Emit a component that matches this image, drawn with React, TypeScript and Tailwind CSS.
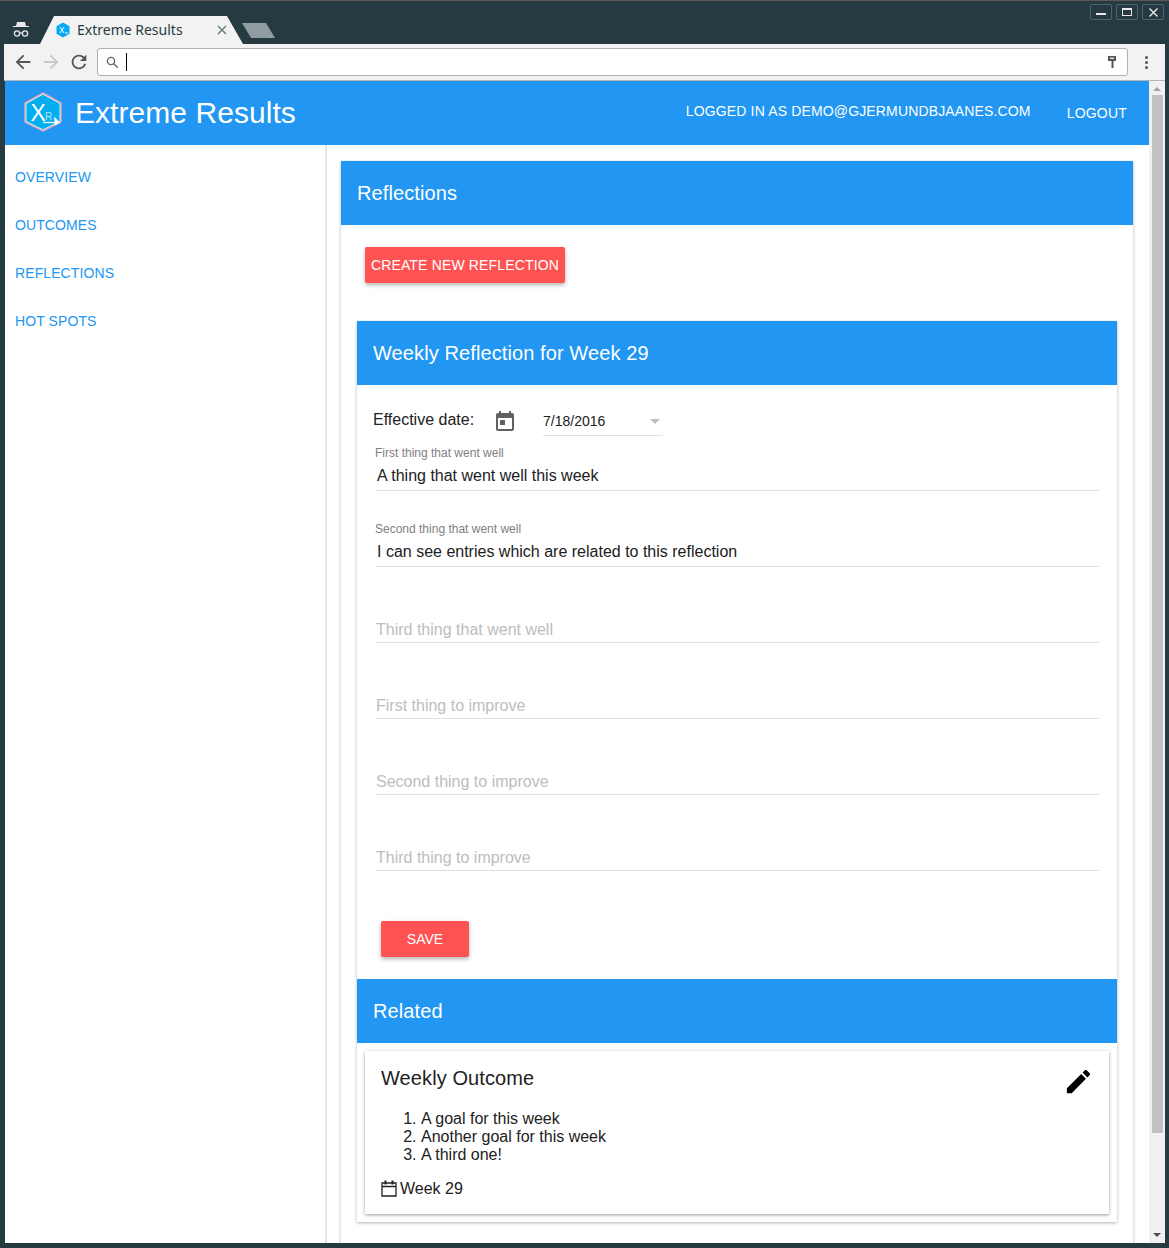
import React from "react";

const font = { fontFamily: '"Liberation Sans", Arial, sans-serif' };

function Field({ label, value, placeholder }: { label?: string; value?: string; placeholder?: string }) {
  return (
    <div className="h-[76px] flex flex-col justify-end border-b border-[#e0e0e0]">
      {label && <div className="text-[12px] leading-[14px] text-[#808080] mb-[6px]">{label}</div>}
      {value ? (
        <div className="text-[16px] leading-[20px] text-[#212121] pl-[2px] pb-[4px]">{value}</div>
      ) : (
        <div className="text-[16px] leading-[20px] text-[#bdbdbd] pl-[1px] pb-[2px]">{placeholder}</div>
      )}
    </div>
  );
}

function PanelHeader({ title }: { title: string }) {
  return (
    <div className="h-[64px] bg-[#2196f3] flex items-center px-[16px] text-[20px] tracking-[0.1px] text-white">{title}</div>
  );
}

function WinButton({ children }: { children: React.ReactNode }) {
  return (
    <div className="w-[22px] h-[16px] rounded-[2px] border border-[#4f646c] flex items-center justify-center">
      {children}
    </div>
  );
}

function TitleBar() {
  return (
    <div className="relative h-[44px] shrink-0 bg-[#263a42] border-t border-[#5a5a5a] flex items-end">
      <div className="w-[41px] h-[28px] flex items-center justify-center">
        <svg width="18" height="18" viewBox="0 0 18 18" fill="none">
          <path d="M5 1h8l1 4h3v1H1V5h3z" fill="#e8e8e8" />
          <circle cx="5" cy="12.5" r="2.6" stroke="#e8e8e8" strokeWidth="1.3" />
          <circle cx="13" cy="12.5" r="2.6" stroke="#e8e8e8" strokeWidth="1.3" />
          <path d="M7.6 12h2.8" stroke="#e8e8e8" strokeWidth="1.2" />
        </svg>
      </div>
      <div className="ml-[-1px] w-[203px] h-[28px] bg-[#f2f2f2] [clip-path:polygon(0_100%,14px_0,187px_0,100%_100%)] flex items-center pl-[15px] pr-[16px]">
        <svg width="16" height="16" viewBox="0 0 16 16" className="mr-[6px]">
          <path d="M8 .5 14.500 4.200v7.600L8 15.500 1.500 11.800V4.200z" fill="#03a9f4" />
          <path d="M5 5l4 6M9 5l-4 6" stroke="#fff" strokeWidth="1" />
          <path d="M10 11h3" stroke="#fff" strokeWidth="1" />
        </svg>
        <span className="text-[14px] leading-[20px] mb-[1px] text-[#263a42] flex-1" style={{ fontFamily: '"Noto Sans", sans-serif' }}>
          Extreme Results
        </span>
        <svg width="10" height="10" viewBox="0 0 10 10">
          <path d="M1 1l8 8M9 1l-8 8" stroke="#6f7f7f" strokeWidth="1.5" />
        </svg>
      </div>
      <div className="w-[33px] h-[15px] mb-[6px] ml-[-1px] bg-[#8f9ca0] [clip-path:polygon(0_0,24px_0,100%_100%,9px_100%)]" />
      <div className="absolute top-[3px] right-[5px] flex gap-[4px]">
        <WinButton>
          <div className="w-[10px] h-[2px] bg-[#e8e8e8] mt-[3px]" />
        </WinButton>
        <WinButton>
          <div className="w-[10px] h-[8px] border border-[#e8e8e8] border-t-2" />
        </WinButton>
        <WinButton>
          <svg width="9" height="9" viewBox="0 0 9 9">
            <path d="M.5.5l8 8M8.500.5l-8 8" stroke="#e8e8e8" strokeWidth="1.4" />
          </svg>
        </WinButton>
      </div>
    </div>
  );
}

function Toolbar() {
  return (
    <div className="h-[37px] shrink-0 bg-[#f2f2f2] border-b border-[#b4b4b4] flex items-center pl-[8px] pr-[9px] ml-[-1px]">
      <svg width="22" height="22" viewBox="0 0 24 24" className="mr-[6px]" fill="#555">
        <path d="M20 11H7.830l5.590-5.590L12 4l-8 8 8 8 1.410-1.410L7.830 13H20z" />
      </svg>
      <svg width="22" height="22" viewBox="0 0 24 24" className="mr-[6px]" fill="#c8c8c8">
        <path d="M12 4l-1.410 1.410L16.170 11H4v2h12.170l-5.580 5.590L12 20l8-8z" />
      </svg>
      <svg width="22" height="22" viewBox="0 0 24 24" className="mr-[7px]" fill="#555">
        <path d="M17.650 6.350A7.958 7.958 0 0 0 12 4c-4.420 0-7.990 3.580-7.990 8s3.570 8 7.990 8c3.730 0 6.840-2.550 7.730-6h-2.080A5.990 5.990 0 0 1 12 18c-3.310 0-6-2.690-6-6s2.690-6 6-6c1.660 0 3.140.69 4.220 1.780L13 11h7V4z" />
      </svg>
      <div className="w-[1031px] h-[28px] bg-white border border-[#b0b0b0] rounded-[3px] flex items-center pl-[8px] pr-[10px]">
        <svg width="13" height="13" viewBox="0 0 13 13" fill="none" stroke="#666" strokeWidth="1.4">
          <circle cx="5" cy="5" r="3.6" />
          <path d="M7.800 7.800l4 4" />
        </svg>
        <div className="w-px h-[18px] bg-black ml-[7px]" />
        <div className="flex-1" />
        <svg width="10" height="14" viewBox="0 0 10 14">
          <path d="M1 1h8v5H6.500v7H4.500V6H1z" fill="#555" />
          <path d="M3 2.500h4v1.500H3z" fill="#ddd" />
        </svg>
      </div>
      <div className="ml-[17px] flex flex-col gap-[2px]">
        <div className="w-[3px] h-[3px] rounded-full bg-[#555]" />
        <div className="w-[3px] h-[3px] rounded-full bg-[#555]" />
        <div className="w-[3px] h-[3px] rounded-full bg-[#555]" />
      </div>
    </div>
  );
}

function Logo() {
  return (
    <svg width="40" height="40" viewBox="0 0 40 40">
      <path d="M20 1 38 11v19L20 39 2 30V11z" fill="#03aef0" stroke="#e3a0b4" strokeWidth="1.500" />
      <path d="M20 2.200 37 11.500v18L20 37.800 3 29.500v-18z" fill="none" stroke="#fff" strokeWidth="0.800" />
      <text x="7.500" y="29" fontSize="23" fill="#fff" fontFamily="Liberation Sans">X</text>
      <text x="22" y="28" fontSize="10" fill="#b8e4fa" fontFamily="Liberation Sans">R</text>
      <path d="M20 30.500h13" stroke="#fff" strokeWidth="1.200" />
      <path d="M31 24.500l6 6-5 3z" fill="#fff" />
    </svg>
  );
}

function Scrollbar() {
  return (
    <div className="w-[16px] shrink-0 bg-[#f1f1f1] flex flex-col items-center justify-between">
      <div className="w-full flex flex-col items-center">
        <div className="mt-[6px] w-0 h-0 border-x-[4px] border-x-transparent border-b-[4px] border-b-[#a3a3a3]" />
        <div className="mt-[4px] w-[11px] h-[1038px] bg-[#c1c1c1]" />
      </div>
      <div className="mb-[6px] w-0 h-0 border-x-[4px] border-x-transparent border-t-[4px] border-t-[#505050]" />
    </div>
  );
}

const links = ["OVERVIEW", "OUTCOMES", "REFLECTIONS", "HOT SPOTS"];
const goals = ["A goal for this week", "Another goal for this week", "A third one!"];

export default function App() {
  return (
    <div className="w-[1169px] h-[1248px] bg-[#263a42] flex flex-col overflow-hidden" style={font}>
      <TitleBar />
      <div className="flex-1 min-h-0 flex flex-col pl-[5px] pr-[4px] pb-[5px]">
        <Toolbar />
        <div className="flex-1 min-h-0 flex bg-white">
          <div className="flex-1 min-w-0 flex flex-col overflow-hidden">
            <header className="h-[64px] shrink-0 bg-[#2196f3] flex items-center text-white">
              <div className="ml-[18px] mr-[12px] flex items-center mb-[2px]">
                <Logo />
              </div>
              <div className="text-[30px] leading-[36px] flex-1 tracking-[0.05px]">Extreme Results</div>
              <div className="text-[14px] mb-[4px] tracking-[0.15px]">LOGGED IN AS DEMO@GJERMUNDBJAANES.COM</div>
              <div className="text-[14px] ml-[36px] mr-[22px] tracking-[0.2px]">LOGOUT</div>
            </header>
            <div className="flex-1 min-h-0 flex">
              <nav className="w-[322px] shrink-0 border-r-2 border-[#e6e6e6] pl-[10px] pt-[8px]">
                {links.map((l) => (
                  <div key={l} className="h-[48px] flex items-center text-[14px] tracking-[0.1px] text-[#2196f3]">
                    {l}
                  </div>
                ))}
              </nav>
              <main className="flex-1 min-w-0 pl-[14px] pr-[16px] pt-[16px]">
                <section className="bg-white shadow-[0_1px_3px_rgba(0,0,0,0.3)] pb-[24px]">
                  <PanelHeader title="Reflections" />
                  <div className="px-[16px]">
                    <div className="pt-[22px] pb-[38px] pl-[8px]">
                      <button className="h-[36px] w-[200px] rounded-[2px] bg-[#ff5252] text-white text-[14px] tracking-[0.16px] shadow-[0_2px_4px_rgba(0,0,0,0.3)]">
                        CREATE NEW REFLECTION
                      </button>
                    </div>
                    <div className="shadow-[0_1px_3px_rgba(0,0,0,0.3)] bg-white">
                      <PanelHeader title="Weekly Reflection for Week 29" />
                      <div className="h-[50px] flex items-end pl-[16px]">
                        <span className="text-[16px] text-[#212121] mb-[3px] w-[120px]">Effective date:</span>
                        <svg width="24" height="24" viewBox="0 0 24 24" fill="#616161" className="mb-[1px] mr-[26px]">
                          <path d="M19 3h-1V1h-2v2H8V1H6v2H5c-1.110 0-2 .9-2 2v14c0 1.100.89 2 2 2h14c1.100 0 2-.9 2-2V5c0-1.100-.9-2-2-2zm0 16H5V8h14v11zM7 10h5v5H7z" />
                        </svg>
                        <div className="w-[120px] h-[30px] pt-[2px] mb-[-1px] border-b border-[#e0e0e0] flex items-center justify-between text-[14px] text-[#212121]">
                          7/18/2016
                          <div className="mr-[3px] w-0 h-0 border-x-[5px] border-x-transparent border-t-[5px] border-t-[#bdbdbd]" />
                        </div>
                      </div>
                      <div className="px-[18px] mt-[-20px]">
                        <Field label="First thing that went well" value="A thing that went well this week" />
                        <Field label="Second thing that went well" value="I can see entries which are related to this reflection" />
                        <Field placeholder="Third thing that went well" />
                        <Field placeholder="First thing to improve" />
                        <Field placeholder="Second thing to improve" />
                        <Field placeholder="Third thing to improve" />
                      </div>
                      <div className="pl-[24px] pt-[50px] pb-[22px]">
                        <button className="h-[36px] w-[88px] rounded-[2px] bg-[#ff5252] text-white text-[14px] shadow-[0_2px_4px_rgba(0,0,0,0.3)]">
                          SAVE
                        </button>
                      </div>
                      <PanelHeader title="Related" />
                      <div className="px-[8px] pt-[8px] pb-[8px]">
                        <div className="h-[163px] bg-white shadow-[0_1px_3px_rgba(0,0,0,0.4)] px-[16px] relative text-[#212121]">
                          <div className="text-[20px] leading-[24px] pt-[15px] tracking-[0.1px]">Weekly Outcome</div>
                          <ol className="mt-[20px] list-decimal pl-[40px] text-[16px] leading-[18px]">
                            {goals.map((g) => (
                              <li key={g}>{g}</li>
                            ))}
                          </ol>
                          <div className="mt-[16px] flex items-center text-[16px] leading-[18px]">
                            <svg width="16" height="17" viewBox="0 0 16 17" fill="none" stroke="#212121" strokeWidth="1.300" className="mr-[3px] mt-[-2px]">
                              <path d="M1 3h14v13H1zM1 6.500h14" />
                              <path d="M4.500 .5v4M11.500 .5v4" strokeWidth="2" />
                            </svg>
                            Week 29
                          </div>
                          <svg width="31" height="31" viewBox="0 0 24 24" fill="#000" className="absolute top-[15px] right-[15px]">
                            <path d="M3 17.250V21h3.750L17.810 9.940l-3.750-3.750L3 17.250zM20.710 7.040a.996.996 0 0 0 0-1.410l-2.340-2.340a.996.996 0 0 0-1.410 0l-1.830 1.830 3.750 3.750 1.830-1.830z" />
                          </svg>
                        </div>
                      </div>
                    </div>
                  </div>
                </section>
              </main>
            </div>
          </div>
          <Scrollbar />
        </div>
      </div>
    </div>
  );
}
